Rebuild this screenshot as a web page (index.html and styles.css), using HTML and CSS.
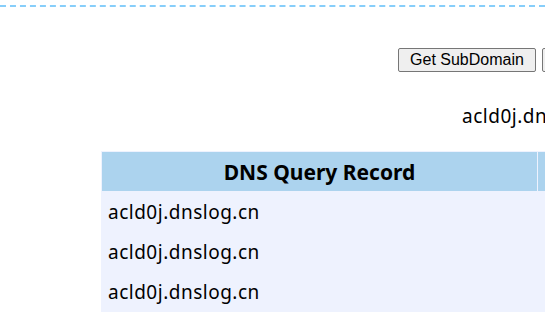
FILE: index.html
```html
<!DOCTYPE html>
<html>
<head>
<meta charset="utf-8">
<link rel="stylesheet" href="styles.css">
</head>
<body>
<div class="topline"></div>
<div class="page">
  <div class="actions">
    <button class="btn">Get SubDomain</button>
    <button class="btn">Refresh Record</button>
  </div>
  <div class="domain">acld0j.dnslog.cn</div>
  <table class="records">
    <thead>
      <tr><th class="c1">DNS Query Record</th><th class="c2">IP Address</th><th class="c3">Created Time</th></tr>
    </thead>
    <tbody>
      <tr><td>acld0j.dnslog.cn</td><td>1.1.1.1</td><td>2024-01-01 00:00:00</td></tr>
      <tr><td>acld0j.dnslog.cn</td><td>1.1.1.1</td><td>2024-01-01 00:00:00</td></tr>
      <tr><td>acld0j.dnslog.cn</td><td>1.1.1.1</td><td>2024-01-01 00:00:00</td></tr>
    </tbody>
  </table>
</div>
</body>
</html>
```

FILE: styles.css
```css
html, body {
  margin: 0;
  padding: 0;
  overflow: hidden;
  background: #ffffff;
}
body {
  font-family: "Noto Sans", "Open Sans", sans-serif;
  color: #000;
}
.topline {
  height: 5px;
  border-bottom: 2px dashed #87cefa;
}
.page {
  width: 1076px;
  text-align: center;
}
.actions {
  margin-top: 41px;
  display: flex;
  justify-content: center;
  gap: 6px;
}
.btn {
  font-family: "Liberation Sans", Arial, sans-serif;
  font-size: 16px;
  line-height: 20px;
  height: 24px;
  padding: 1px 11px;
  background: #efefef;
  border: 1px solid #767676;
  border-radius: 2px;
  color: #000;
}
.domain {
  margin-top: 32px;
  font-size: 19px;
  letter-spacing: 0.5px;
  line-height: 24px;
}
.records {
  margin: 23px auto 0;
  width: 874px;
  border-spacing: 1px;
  background: #eef2fe;
  table-layout: fixed;
}
.records th {
  background: #acd3ee;
  height: 39px;
  padding: 0;
  font-size: 21px;
  font-weight: bold;
}
.records .c1 { width: 435px; }
.records .c2 { width: 217px; }
.records td {
  height: 39px;
  padding: 0 6px;
  text-align: left;
  font-size: 19px;
  letter-spacing: 0.5px;
}
```
